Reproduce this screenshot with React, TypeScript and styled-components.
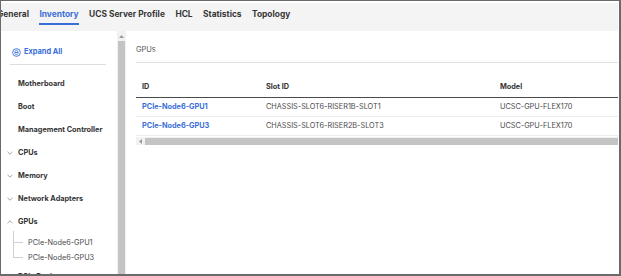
import React from 'react';
import styled, { createGlobalStyle } from 'styled-components';

// #region styles

const GlobalStyle = createGlobalStyle`
  html, body {
    margin: 0;
    padding: 0;
    background: #ffffff;
  }
  body {
    font-family: Inter, 'Noto Sans', 'Liberation Sans', sans-serif;
    color: #333;
  }
`;

const Frame = styled.div`
  width: 621px;
  height: 276px;
  box-sizing: border-box;
  border: 1px solid #6a6a6a;
  border-right-width: 2px;
  border-bottom-width: 2px;
  padding: 2px 1px 0 0;
  display: flex;
  flex-direction: column;
  overflow: hidden;
`;

const TabBar = styled.div`
  height: 28px;
  flex: none;
  background: #f4f4f4;
  display: flex;
  align-items: flex-start;
  gap: 10.5px;
  margin-left: -4px;
`;

const Tab = styled.div<{ $active?: boolean }>`
  font-size: 8.4px;
  font-weight: 650;
  line-height: 12px;
  padding: 5px 0 3px;
  white-space: nowrap;
  color: ${(props) => (props.$active ? '#3a6fd8' : '#363636')};
  border-bottom: 2px solid ${(props) => (props.$active ? '#3a6fd8' : 'transparent')};
`;

const Body = styled.div`
  flex: 1;
  display: flex;
  min-height: 0;
`;

const SidePanel = styled.div`
  width: 116px;
  flex: none;
  padding: 15px 0 0 0;
  box-sizing: border-box;
  overflow: hidden;
`;

const ExpandRow = styled.div`
  display: flex;
  align-items: center;
  gap: 3px;
  margin: 0 11px 0 9px;
  padding: 1px 0 7px 2px;
  border-bottom: 1px solid #dedede;
  color: #3a6fd8;
  font-size: 7.4px;
  font-weight: 650;
  line-height: 10px;
`;

const TreeItem = styled.div<{ $indent: number }>`
  display: flex;
  align-items: center;
  height: 23px;
  padding-left: ${(props) => props.$indent}px;
  font-size: 7.3px;
  font-weight: 650;
  line-height: 10px;
  color: #333;
  white-space: nowrap;
`;

const Chevron = styled.span`
  width: 11px;
  display: inline-flex;
  align-items: center;
`;

const ChildList = styled.div`
  position: relative;
  margin-left: 12px;
  padding-top: 2px;
`;

const ChildItem = styled.div<{ $last?: boolean }>`
  position: relative;
  height: 15px;
  display: flex;
  align-items: center;
  padding-left: 15px;
  font-size: 7.3px;
  line-height: 10px;
  color: #4a4a4a;
  white-space: nowrap;
  &::before {
    content: '';
    position: absolute;
    left: 0;
    top: ${(props) => (props.$last ? '-7px' : '-4px')};
    height: ${(props) => (props.$last ? '14px' : '19px')};
    border-left: 1px solid #cfcfcf;
  }
  &::after {
    content: '';
    position: absolute;
    left: 0;
    top: 7px;
    width: 10px;
    border-top: 1px solid #cfcfcf;
  }
`;

const VScroll = styled.div`
  width: 9px;
  flex: none;
  background: #f1f1f1;
  display: flex;
  flex-direction: column;
  align-items: center;
`;

const VArrow = styled.div`
  height: 9px;
  width: 9px;
  display: flex;
  align-items: center;
  justify-content: center;
  margin-top: 1px;
`;

const VThumb = styled.div`
  flex: 1;
  width: 7px;
  background: #c4c4c4;
`;

const Content = styled.div`
  flex: 1;
  min-width: 0;
  padding: 14px 0 0 10px;
  overflow: hidden;
`;

const SectionTitle = styled.div`
  font-size: 7.4px;
  line-height: 10px;
  color: #555;
  padding-bottom: 7px;
  border-bottom: 1px solid #e2e2e2;
  margin-bottom: 15px;
`;

const Table = styled.div`
  display: grid;
  grid-template-columns: 124px 234px 1fr;
`;

const HeadCell = styled.div`
  font-size: 7.3px;
  font-weight: 700;
  line-height: 10px;
  color: #333;
  padding: 4px 6px 5px;
  border-bottom: 1.5px solid #4a4a4a;
  white-space: nowrap;
`;

const Cell = styled.div<{ $link?: boolean }>`
  font-size: 7.3px;
  font-weight: ${(props) => (props.$link ? 650 : 400)};
  line-height: 10px;
  color: ${(props) => (props.$link ? '#3a6fd8' : '#4a4a4a')};
  padding: 0 6px;
  height: 19px;
  box-sizing: border-box;
  display: flex;
  align-items: center;
  border-bottom: 1px solid #ececec;
  white-space: nowrap;
`;

const HScroll = styled.div`
  display: flex;
  align-items: center;
  height: 8px;
  margin-top: 1px;
  background: #f1f1f1;
`;

const HArrow = styled.div`
  width: 9px;
  height: 8px;
  display: flex;
  align-items: center;
  justify-content: center;
`;

const HThumb = styled.div`
  flex: 1;
  height: 7px;
  background: #c4c4c4;
`;

const Spacer = styled.div<{ $h: number }>`
  height: ${(props) => props.$h}px;
`;

// #endregion styles

const tabs = ['General', 'Inventory', 'UCS Server Profile', 'HCL', 'Statistics', 'Topology'];

const treeItems: { label: string; chevron?: 'down' | 'up' }[] = [
  { label: 'Motherboard' },
  { label: 'Boot' },
  { label: 'Management Controller' },
  { label: 'CPUs', chevron: 'down' },
  { label: 'Memory', chevron: 'down' },
  { label: 'Network Adapters', chevron: 'down' },
  { label: 'GPUs', chevron: 'up' },
];

const gpus = [
  { id: 'PCIe-Node6-GPU1', slot: 'CHASSIS-SLOT6-RISER1B-SLOT1', model: 'UCSC-GPU-FLEX170' },
  { id: 'PCIe-Node6-GPU3', slot: 'CHASSIS-SLOT6-RISER2B-SLOT3', model: 'UCSC-GPU-FLEX170' },
];

const ExpandIcon = () => (
  <svg width="9" height="9" viewBox="0 0 10 10" fill="none" stroke="#3a6fd8" strokeWidth="1">
    <circle cx="5" cy="5" r="4.3" />
    <path d="M3.3 3.6 L5 2.6 L6.7 3.6 M3.3 6.4 L5 7.4 L6.7 6.4 M3.2 5 H6.8" strokeLinecap="round" />
  </svg>
);

const ChevronIcon = (props: { dir: 'down' | 'up' }) => (
  <svg width="6" height="4" viewBox="0 0 6 4" fill="none" stroke="#9a9a9a" strokeWidth="0.9">
    {props.dir == 'down' ? <path d="M0.5 0.8 L3 3.2 L5.5 0.8" /> : <path d="M0.5 3.2 L3 0.8 L5.5 3.2" />}
  </svg>
);

// インベントリ画面
export default function App() {
  return (
    <>
      <GlobalStyle />
      <Frame>
        <TabBar>
          {tabs.map((t) => (
            <Tab key={t} $active={t == 'Inventory'}>
              {t}
            </Tab>
          ))}
        </TabBar>
        <Body>
          <SidePanel>
            <ExpandRow>
              <ExpandIcon />
              Expand All
            </ExpandRow>
            <Spacer $h={7} />
            {treeItems.map((item) => (
              <TreeItem key={item.label} $indent={item.chevron ? 6 : 17}>
                {item.chevron && (
                  <Chevron>
                    <ChevronIcon dir={item.chevron} />
                  </Chevron>
                )}
                {item.label}
              </TreeItem>
            ))}
            <ChildList>
              <ChildItem>PCIe-Node6-GPU1</ChildItem>
              <ChildItem $last>PCIe-Node6-GPU3</ChildItem>
            </ChildList>
            <TreeItem $indent={6}>
              <Chevron>
                <ChevronIcon dir="down" />
              </Chevron>
              PCIe Devices
            </TreeItem>
          </SidePanel>
          <VScroll>
            <VArrow>
              <svg width="5" height="3" viewBox="0 0 5 3">
                <path d="M0 3 L2.5 0 L5 3 Z" fill="#9a9a9a" />
              </svg>
            </VArrow>
            <VThumb />
          </VScroll>
          <Content>
            <SectionTitle>GPUs</SectionTitle>
            <Table>
              <HeadCell>ID</HeadCell>
              <HeadCell>Slot ID</HeadCell>
              <HeadCell>Model</HeadCell>
              {gpus.map((g) => (
                <React.Fragment key={g.id}>
                  <Cell $link>{g.id}</Cell>
                  <Cell>{g.slot}</Cell>
                  <Cell>{g.model}</Cell>
                </React.Fragment>
              ))}
            </Table>
            <HScroll>
              <HArrow>
                <svg width="3" height="5" viewBox="0 0 3 5">
                  <path d="M3 0 L0 2.5 L3 5 Z" fill="#9a9a9a" />
                </svg>
              </HArrow>
              <HThumb />
            </HScroll>
          </Content>
        </Body>
      </Frame>
    </>
  );
}
